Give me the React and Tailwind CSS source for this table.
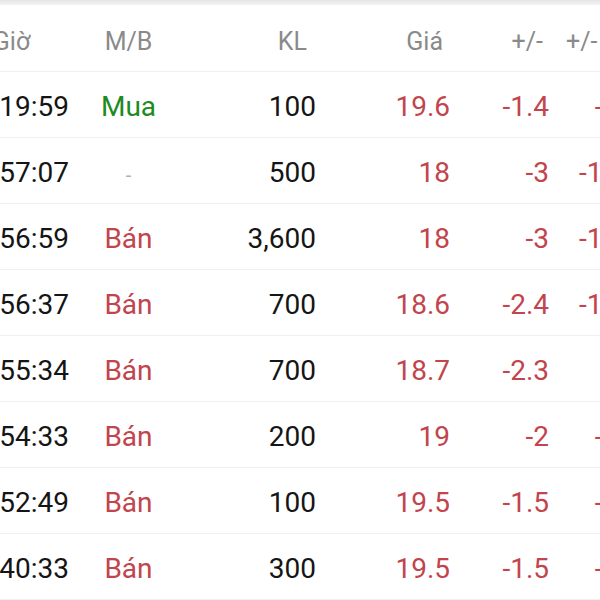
import React from "react";

const rows = [
  { t: "14:19:59", mb: "Mua", kl: "100", gia: "19.6", d: "-1.4", p: "-6.67" },
  { t: "14:57:07", mb: "-", kl: "500", gia: "18", d: "-3", p: "-14.29" },
  { t: "14:56:59", mb: "Bán", kl: "3,600", gia: "18", d: "-3", p: "-14.29" },
  { t: "14:56:37", mb: "Bán", kl: "700", gia: "18.6", d: "-2.4", p: "-11.43" },
  { t: "14:55:34", mb: "Bán", kl: "700", gia: "18.7", d: "-2.3", p: "-9.5" },
  { t: "14:54:33", mb: "Bán", kl: "200", gia: "19", d: "-2", p: "-9.52" },
  { t: "14:52:49", mb: "Bán", kl: "100", gia: "19.5", d: "-1.5", p: "-7.14" },
  { t: "14:40:33", mb: "Bán", kl: "300", gia: "19.5", d: "-1.5", p: "-7.14" },
];

function MB({ v }) {
  if (v === "Mua") return <span className="text-[#1d8a22]">Mua</span>;
  if (v === "Bán") return <span className="text-[#c2444c]">Bán</span>;
  return <span className="text-[20px] text-[#b0b0b0]">-</span>;
}

export default function App() {
  return (
    <div
      className="w-[600px] h-[600px] overflow-hidden bg-white"
      style={{ fontFamily: "Roboto, 'Noto Sans', sans-serif" }}
    >
      <div className="h-[5px] bg-gradient-to-b from-[#e6e6e6] to-[#f3f3f3]" />
      <div className="ml-[-60px] w-[717px]">
        <div className="flex h-[67px] items-center pt-[6px] border-b border-[#efefef] text-[25px] text-[#8a8a8a] leading-none">
          <div className="w-[146px] text-center pr-[3px]">Giờ</div>
          <div className="w-[85px] text-center">M/B</div>
          <div className="w-[145px] text-right pr-[9px]">KL</div>
          <div className="w-[134px] text-right pr-[7px]">Giá</div>
          <div className="w-[99px] text-right pr-[6px]">+/-</div>
          <div className="w-[108px] text-left pl-[17px]">+/-</div>
        </div>
        {rows.map((r, i) => (
          <div
            key={i}
            className="flex h-[66px] items-center pt-[4px] border-b border-[#efefef] text-[28px] leading-none"
          >
            <div className="w-[146px] text-center pl-[4px] text-[#151515]">{r.t}</div>
            <div className="w-[85px] text-center">
              <MB v={r.mb} />
            </div>
            <div className="w-[145px] text-right text-[#151515]">{r.kl}</div>
            <div className="w-[134px] text-right text-[#c2444c]">{r.gia}</div>
            <div className="w-[99px] text-right text-[#c2444c]">{r.d}</div>
            <div className="w-[108px] text-right text-[#c2444c]">{r.p}</div>
          </div>
        ))}
      </div>
    </div>
  );
}
